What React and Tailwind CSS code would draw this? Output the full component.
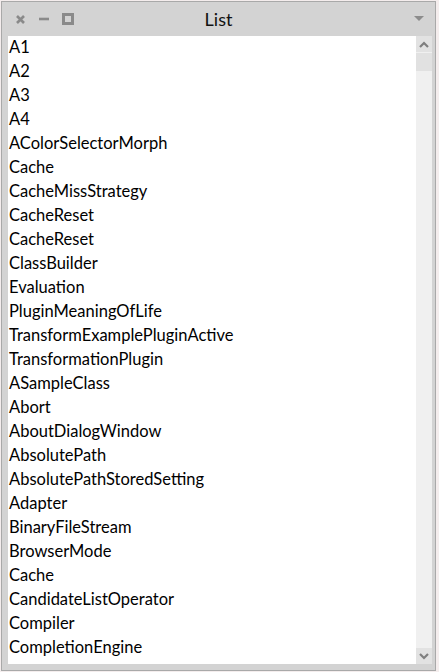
import React from "react";

const ITEMS = [
  "A1",
  "A2",
  "A3",
  "A4",
  "AColorSelectorMorph",
  "Cache",
  "CacheMissStrategy",
  "CacheReset",
  "CacheReset",
  "ClassBuilder",
  "Evaluation",
  "PluginMeaningOfLife",
  "TransformExamplePluginActive",
  "TransformationPlugin",
  "ASampleClass",
  "Abort",
  "AboutDialogWindow",
  "AbsolutePath",
  "AbsolutePathStoredSetting",
  "Adapter",
  "BinaryFileStream",
  "BrowserMode",
  "Cache",
  "CandidateListOperator",
  "Compiler",
  "CompletionEngine",
];

function TitleButtons() {
  return (
    <div className="flex items-center pl-[14px]">
      {/* close */}
      <svg width="9" height="9" viewBox="0 0 9 9">
        <path d="M1 1 L8 8 M8 1 L1 8" stroke="#8a8a8a" strokeWidth="2.6" />
      </svg>
      {/* minimize */}
      <svg width="10" height="4" viewBox="0 0 10 4" className="ml-[14px]">
        <path d="M0 2 H10" stroke="#8a8a8a" strokeWidth="2.6" />
      </svg>
      {/* maximize */}
      <svg width="12" height="12" viewBox="0 0 12 12" className="ml-[13px]">
        <rect x="1.5" y="1.5" width="9" height="9" fill="none" stroke="#8a8a8a" strokeWidth="3" />
      </svg>
    </div>
  );
}

export default function App() {
  return (
    <div className="w-[439px] h-[672px] bg-[#f4eded] pt-[1px] pl-[1px]" style={{ fontFamily: 'Lato, sans-serif' }}>
      <div className="w-[435px] h-[670px] bg-[#d3d3d3] border border-[#a9a9a9] flex flex-col">
        <div className="h-[34px] flex items-center relative shrink-0">
          <TitleButtons />
          <div className="absolute inset-0 flex items-center justify-center text-[18px] text-[#111] pointer-events-none">
            List
          </div>
          <div className="ml-auto pr-[10px]">
            <svg width="12" height="8" viewBox="0 0 12 8">
              <path d="M1 1 H11 L6 6 Z" fill="#8c8c8c" />
            </svg>
          </div>
        </div>
        <div className="flex flex-1 ml-[6px] mr-[3px] mb-[6px] bg-white min-h-0">
          <div className="flex-1 overflow-hidden">
            {ITEMS.map((name, i) => (
              <div key={i} className="h-[24px] flex items-center pl-[1px] pb-[1px] text-[16.5px] text-black leading-none">
                {name}
              </div>
            ))}
          </div>
          <div className="w-[16px] bg-[#f0f0f0] flex flex-col">
            <div className="h-[16px] bg-[#e2e2e2] flex items-center justify-center">
              <svg width="10" height="7" viewBox="0 0 10 7">
                <path d="M1 6 L5 2 L9 6" fill="none" stroke="#7f7f7f" strokeWidth="2.2" />
              </svg>
            </div>
            <div className="h-[18px] mt-[1px] bg-[#e1e1e1]" />
            <div className="flex-1" />
            <div className="h-[16px] bg-[#e2e2e2] flex items-center justify-center">
              <svg width="10" height="7" viewBox="0 0 10 7">
                <path d="M1 1 L5 5 L9 1" fill="none" stroke="#7f7f7f" strokeWidth="2.2" />
              </svg>
            </div>
          </div>
        </div>
      </div>
    </div>
  );
}
